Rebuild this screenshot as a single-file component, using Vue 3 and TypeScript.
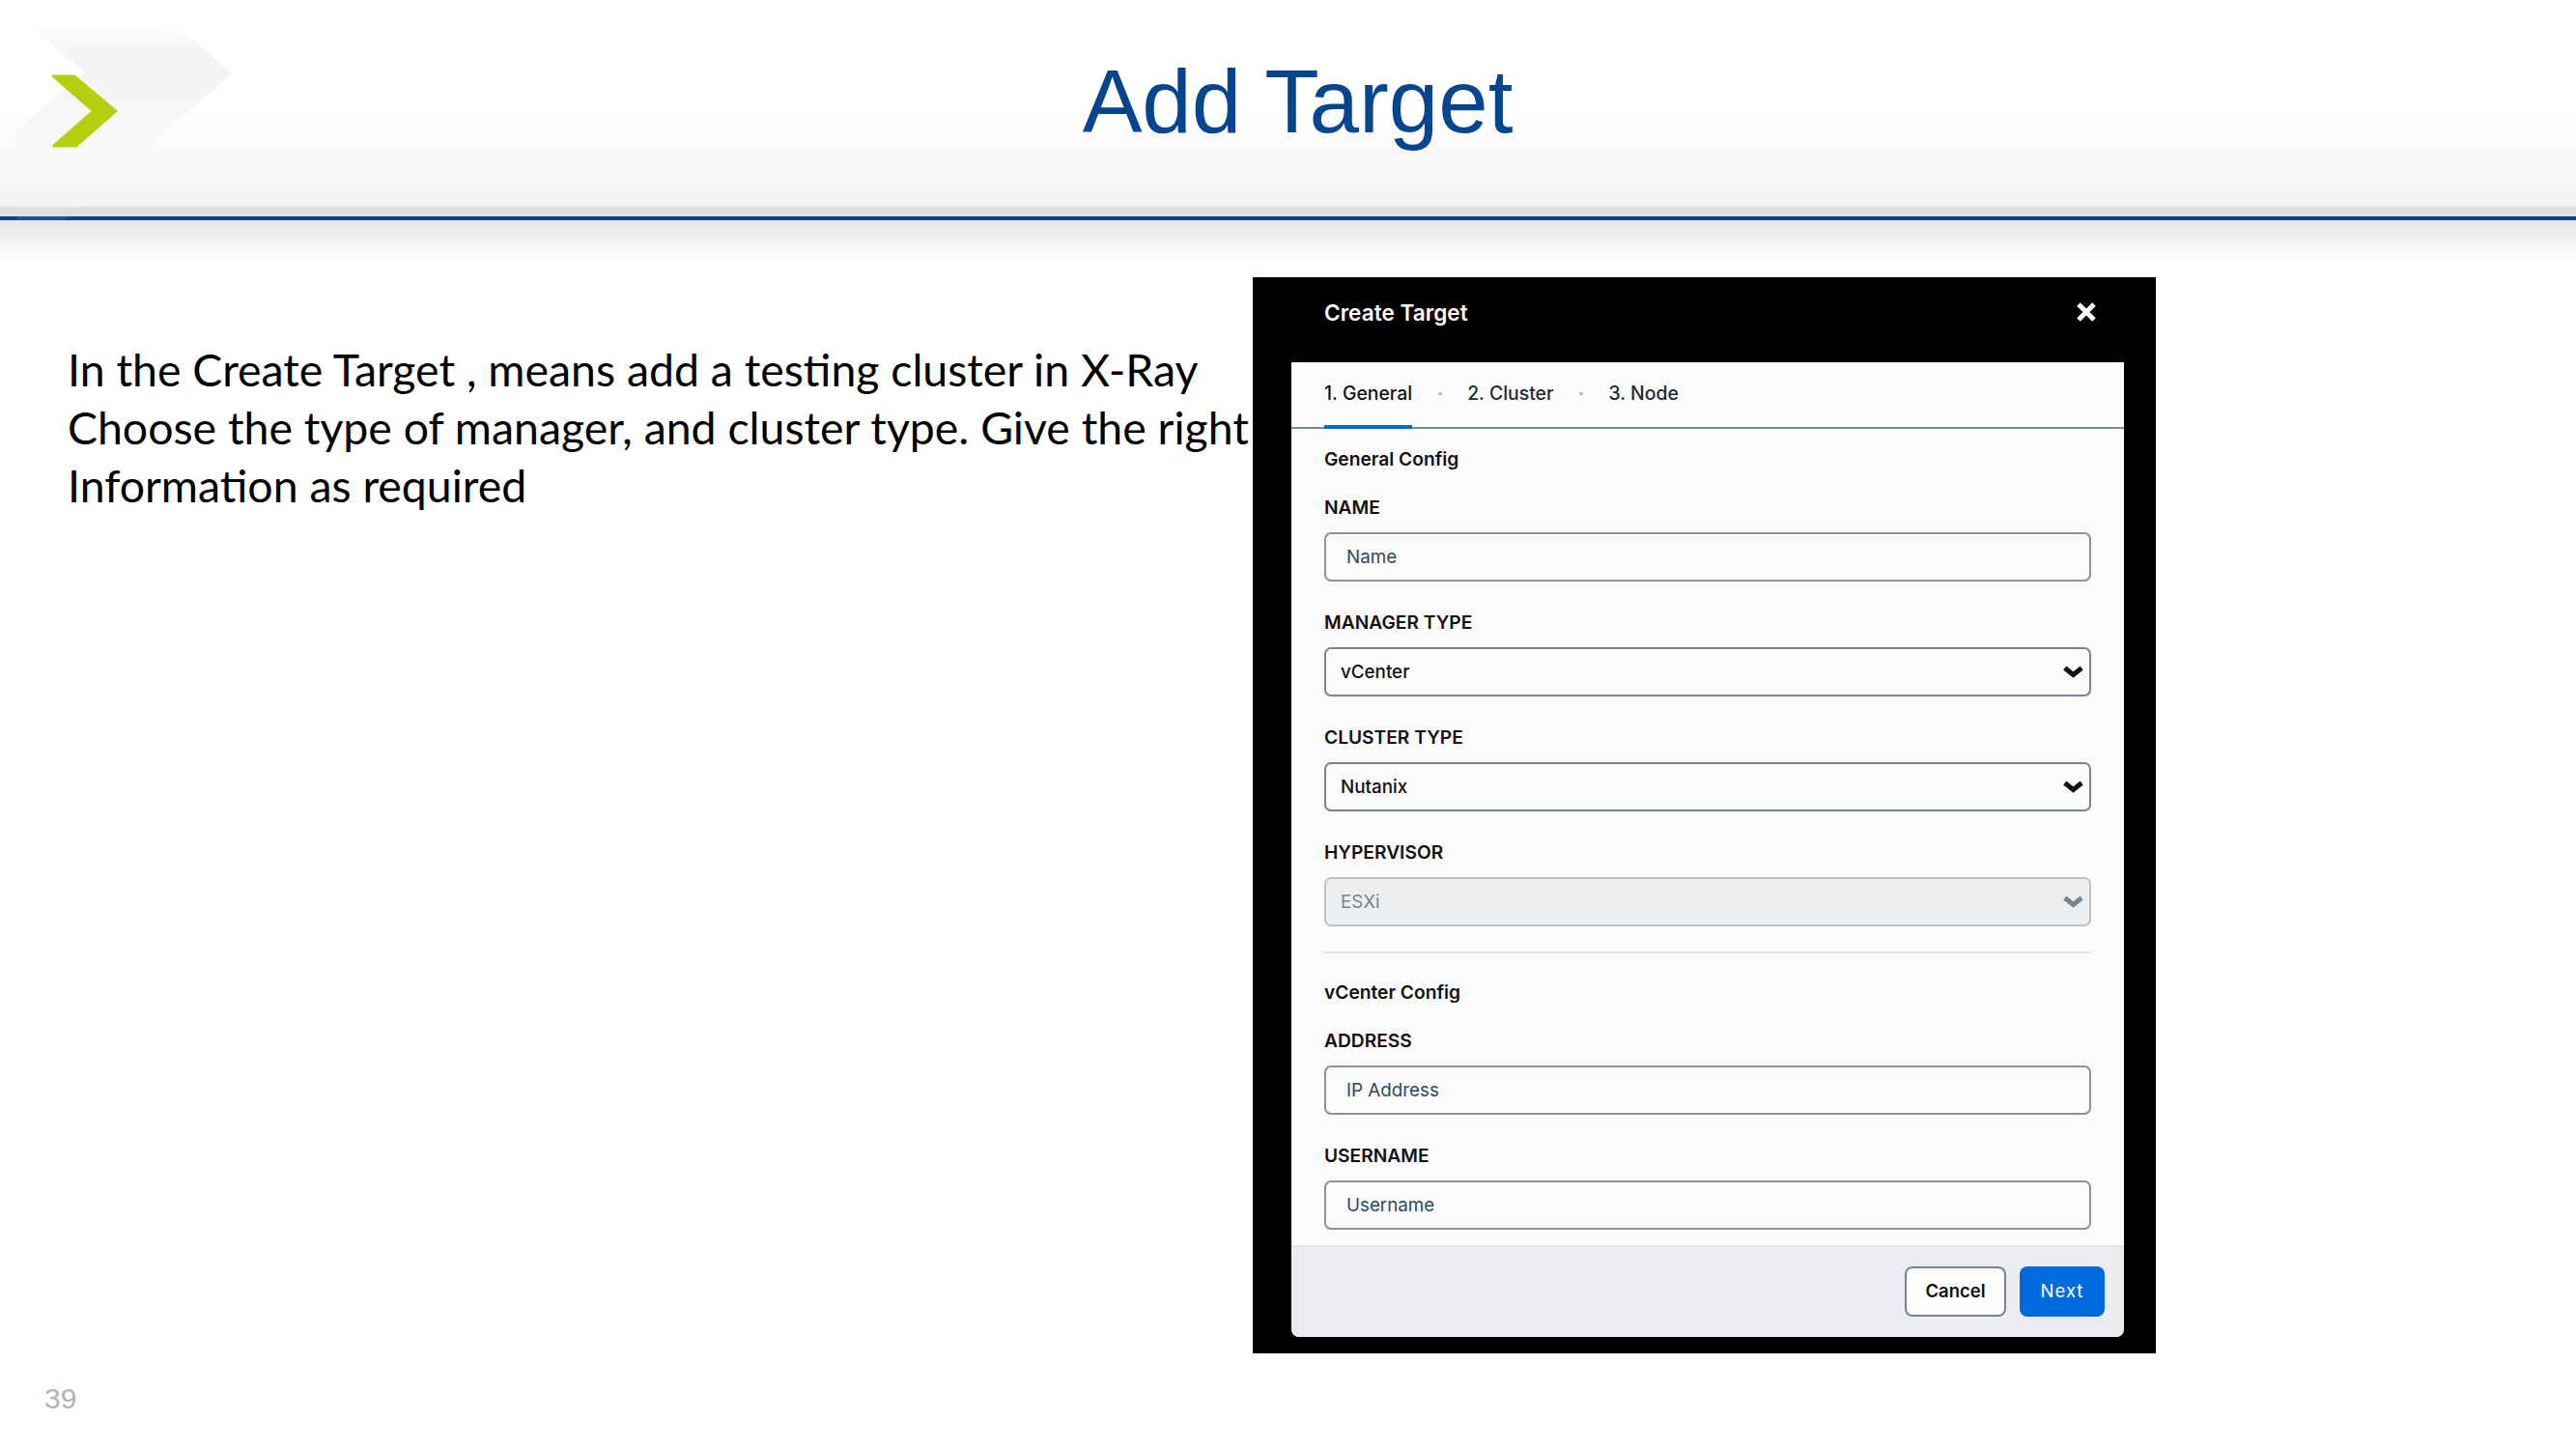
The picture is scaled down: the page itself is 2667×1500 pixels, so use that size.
<script setup lang="ts">
interface Field {
  label: string
  value: string
  kind: 'input' | 'select' | 'disabled'
}

const tabs = ['1. General', '2. Cluster', '3. Node']

const generalFields: Field[] = [
  { label: 'NAME', value: 'Name', kind: 'input' },
  { label: 'MANAGER TYPE', value: 'vCenter', kind: 'select' },
  { label: 'CLUSTER TYPE', value: 'Nutanix', kind: 'select' },
  { label: 'HYPERVISOR', value: 'ESXi', kind: 'disabled' }
]

const vcenterFields: Field[] = [
  { label: 'ADDRESS', value: 'IP Address', kind: 'input' },
  { label: 'USERNAME', value: 'Username', kind: 'input' }
]

const sections = [
  { title: 'General Config', fields: generalFields },
  { title: 'vCenter Config', fields: vcenterFields }
]

const lines = [
  'In the Create Target , means add a testing cluster in X-Ray',
  'Choose the type of manager, and cluster type. Give the right',
  'Information as required'
]
</script>

<template>
  <div class="slide">
    <header class="head">
      <svg class="logo" width="260" height="228" viewBox="0 0 260 228">
        <defs>
          <linearGradient id="ghost" x1="0" y1="0" x2="0" y2="1">
            <stop offset="0" stop-color="#fdfdfd" />
            <stop offset="0.2" stop-color="#f3f3f3" />
            <stop offset="0.55" stop-color="#f6f6f6" />
            <stop offset="1" stop-color="#f6f6f6" stop-opacity="0" />
          </linearGradient>
        </defs>
        <polygon points="33,28 187,30 241,76 115,183 17,183 17,135 88,75" fill="url(#ghost)" />
        <polygon points="17,183 115,183 66,228 17,228" fill="#fff" opacity="0.08" />
        <polygon points="54,77.5 77.5,77.5 122,115 79,152.5 54.5,152.5 54.5,150 94.5,115 54,79.5" fill="#b5cf0e" />
      </svg>
      <h1 class="title">Add Target</h1>
    </header>

    <main class="body">
      <div class="copy">
        <p v-for="line in lines" :key="line">{{ line }}</p>
      </div>

      <section class="panel">
        <div class="panel-head">
          <span class="panel-title">Create Target</span>
          <svg width="22" height="22" viewBox="0 0 22 22">
            <path d="M3 3 L19 19 M19 3 L3 19" stroke="#fff" stroke-width="5" fill="none" />
          </svg>
        </div>

        <div class="dialog">
          <nav class="tabs">
            <template v-for="(tab, i) in tabs" :key="tab">
              <span v-if="i > 0" class="dot"></span>
              <span class="tab" :class="{ active: i === 0 }">{{ tab }}</span>
            </template>
          </nav>

          <div class="form">
            <template v-for="(section, s) in sections" :key="section.title">
              <hr v-if="s > 0" class="rule" />
              <h3 class="section-title">{{ section.title }}</h3>
              <div v-for="field in section.fields" :key="field.label" class="field">
                <label class="label">{{ field.label }}</label>
                <div class="control" :class="field.kind">
                  <span>{{ field.value }}</span>
                  <svg v-if="field.kind !== 'input'" width="21" height="13" viewBox="0 0 21 13">
                    <path d="M1.8 2.5 L10.5 9.5 L19.2 2.5" stroke="currentColor" stroke-width="5" fill="none" />
                  </svg>
                </div>
              </div>
            </template>
          </div>

          <footer class="actions">
            <button class="btn cancel">Cancel</button>
            <button class="btn next">Next</button>
          </footer>
        </div>
      </section>
    </main>

    <div class="page-no">39</div>
  </div>
</template>

<style scoped>
.slide {
  width: 2667px;
  height: 1500px;
  display: flex;
  flex-direction: column;
  overflow: hidden;
  background: #fff;
}

.head {
  position: relative;
  height: 270px;
  flex: none;
  background:
    linear-gradient(to bottom, #fff 110px, #f3f3f3 214px, #dedede 214px, #dedede 224px, #03458f 224px, #03458f 228px, #e6e6e6 228px, #fff 270px);
}

.logo {
  position: absolute;
  left: 0;
  top: 0;
}

.title {
  margin: 0;
  padding: 52px 0 0 20px;
  text-align: center;
  font: 400 92.5px/106px "Liberation Sans", Arial, sans-serif;
  color: #03458f;
  position: relative;
}

.body {
  flex: none;
  display: flex;
  height: 1131px;
  padding-top: 17px;
  box-sizing: border-box;
}

.copy {
  width: 1297px;
  flex: none;
  box-sizing: border-box;
  padding: 65px 0 0 70px;
  font: 400 46.4px/60px Lato, "Open Sans", sans-serif;
  color: #000;
}

.copy p {
  margin: 0;
  white-space: nowrap;
}

.panel {
  width: 935px;
  height: 1114px;
  flex: none;
  box-sizing: border-box;
  padding: 0 33px 17px 40px;
  background: #000;
  display: flex;
  flex-direction: column;
  font-family: Inter, "Open Sans", sans-serif;
}

.panel-head {
  height: 88px;
  flex: none;
  display: flex;
  align-items: center;
  justify-content: space-between;
  padding: 0 28px 16px 34px;
  box-sizing: border-box;
}

.panel-title {
  font-size: 22.6px;
  font-weight: 600;
  color: #fff;
}

.dialog {
  flex: 1;
  min-height: 0;
  display: flex;
  flex-direction: column;
  background: #fbfbfb;
  border-radius: 0 0 8px 8px;
  overflow: hidden;
}

.tabs {
  height: 69px;
  flex: none;
  box-sizing: border-box;
  border-bottom: 2px solid #7a8a94;
  display: flex;
  align-items: stretch;
  padding-left: 34px;
  font-size: 19.4px;
  font-weight: 500;
  color: #1c2b36;
}

.tab {
  display: flex;
  align-items: center;
  padding-bottom: 2px;
  margin-bottom: -2px;
  box-sizing: border-box;
  border-bottom: 4px solid transparent;
}

.tab.active {
  color: #111;
  border-bottom-color: #0069de;
}

.dot {
  width: 4px;
  height: 3px;
  margin: 31px 26px 0 27px;
  background: #b4bfc4;
}

.form {
  flex: 1;
  min-height: 0;
  padding: 19px 34px 0;
}

.section-title {
  margin: 0 0 26px;
  font-size: 19.2px;
  line-height: 24px;
  font-weight: 600;
  color: #111;
}

.field {
  margin-bottom: 30px;
}

.label {
  display: block;
  margin-bottom: 14px;
  font-size: 19.2px;
  line-height: 24px;
  font-weight: 600;
  color: #111;
}

.control {
  height: 51px;
  box-sizing: border-box;
  display: flex;
  align-items: center;
  justify-content: space-between;
  padding: 0 6px 0 15px;
  border: 2px solid #76858f;
  border-radius: 7px;
  font-size: 18.8px;
  font-weight: 500;
  color: #111;
}

.control.input {
  padding-left: 21px;
  border-color: #8c9194;
  font-weight: 400;
  color: #2d4a5e;
}

.control.disabled {
  background: #edeef0;
  border-color: #bcc3c8;
  font-weight: 400;
  color: #76858f;
}

.rule {
  height: 2px;
  margin: -4px 0 28px;
  border: 0;
  background: #e3e4e8;
}

.actions {
  height: 95px;
  flex: none;
  box-sizing: border-box;
  border-top: 2px solid #e3e4e8;
  background: #ecedf0;
  display: flex;
  justify-content: flex-end;
  gap: 14px;
  padding: 20px 20px 0 0;
}

.btn {
  height: 52px;
  box-sizing: border-box;
  border-radius: 8px;
  font-family: inherit;
  font-size: 18.5px;
  padding: 0 0 2px;
}

.cancel {
  width: 105px;
  background: #fdfdfd;
  border: 2px solid #76858f;
  font-weight: 600;
  color: #111;
}

.next {
  width: 88px;
  background: #0069de;
  border: 0;
  font-weight: 400;
  letter-spacing: 1px;
  color: #fff;
}

.page-no {
  padding: 30px 0 0 46px;
  font: 400 30px/34px "Liberation Sans", Arial, sans-serif;
  color: #b3b3b3;
}
</style>
